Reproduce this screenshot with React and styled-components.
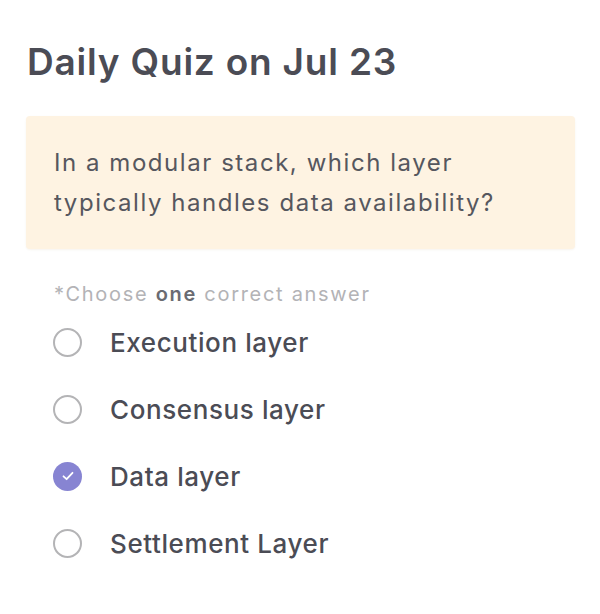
import React from "react";
import styled, { createGlobalStyle } from "styled-components";

const Global = createGlobalStyle`
  html, body { margin: 0; padding: 0; background: #ffffff; }
  body { font-family: Inter, "Noto Sans", sans-serif; }
`;

const Page = styled.div`
  width: 600px;
  height: 614px;
  box-sizing: border-box;
  padding: 36px 25px 0 26px;
  display: flex;
  flex-direction: column;
`;

const Title = styled.h1`
  margin: 0 0 0 1px;
  font-size: 37px;
  line-height: 52px;
  font-weight: 600;
  letter-spacing: 0.8px;
  color: #4b4c55;
`;

const QuestionBox = styled.div`
  margin-top: 28px;
  background: #fef3e2;
  border-radius: 4px;
  box-shadow: 0 1px 2px rgba(200, 180, 150, 0.15);
  padding: 27px 20px 20px 28px;
  height: 133px;
  box-sizing: border-box;
`;

const Question = styled.p`
  margin: 0;
  font-size: 24px;
  line-height: 40px;
  font-weight: 400;
  letter-spacing: 1.55px;
  color: #56575e;
`;

const Hint = styled.div`
  margin: 32px 0 0 28px;
  font-size: 20px;
  line-height: 26px;
  letter-spacing: 1.7px;
  color: #b3b3b6;
  & b {
    font-weight: 600;
    color: #6a6b72;
  }
`;

const Options = styled.div`
  display: flex;
  flex-direction: column;
  gap: 37px;
  margin: 20px 0 0 27px;
`;

const Option = styled.label`
  display: flex;
  align-items: center;
  gap: 28px;
  height: 30px;
  cursor: pointer;
`;

const Radio = styled.span`
  width: 29px;
  height: 29px;
  box-sizing: border-box;
  border-radius: 50%;
  flex: none;
  display: flex;
  align-items: center;
  justify-content: center;
  border: ${(p) => (p.$checked ? "none" : "2px solid #b4b4b6")};
  background: ${(p) => (p.$checked ? "#8784d2" : "#ffffff")};
`;

const Label = styled.span`
  font-size: 26px;
  font-weight: 500;
  color: #4b4c55;
  letter-spacing: 0.6px;
`;

const options = [
  { text: "Execution layer", checked: false },
  { text: "Consensus layer", checked: false },
  { text: "Data layer", checked: true },
  { text: "Settlement Layer", checked: false },
];

export default function App() {
  return (
    <>
      <Global />
      <Page>
        <Title>Daily Quiz on Jul 23</Title>
        <QuestionBox>
          <Question>
            In a modular stack, which layer
            <br />
            typically handles data availability?
          </Question>
        </QuestionBox>
        <Hint>
          *Choose <b>one</b> correct answer
        </Hint>
        <Options>
          {options.map((o) => (
            <Option key={o.text}>
              <Radio $checked={o.checked}>
                {o.checked && (
                  <svg width="14" height="14" viewBox="0 0 14 14" fill="none">
                    <path
                      d="M2.5 7.3 L5.6 10.2 L11.5 3.8"
                      stroke="#ffffff"
                      strokeWidth="1.8"
                      strokeLinecap="round"
                      strokeLinejoin="round"
                    />
                  </svg>
                )}
              </Radio>
              <Label>{o.text}</Label>
            </Option>
          ))}
        </Options>
      </Page>
    </>
  );
}
